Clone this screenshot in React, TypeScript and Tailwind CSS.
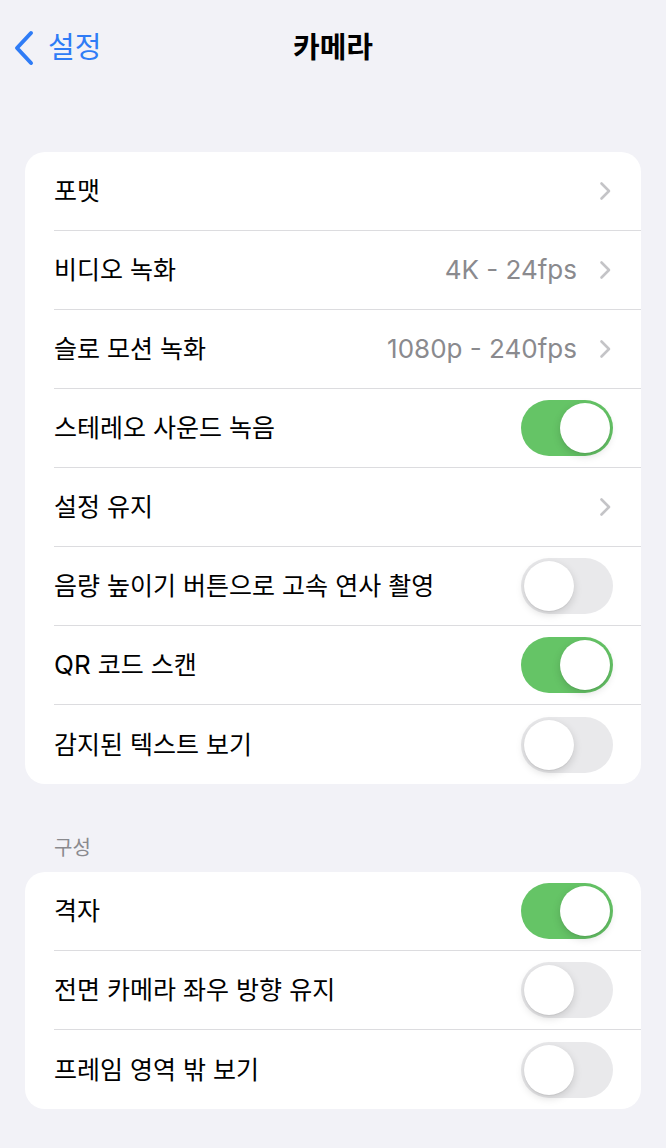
import React from "react";

const KR = { fontFamily: "Inter, 'Noto Sans CJK KR', sans-serif" };

function Chevron() {
  return (
    <svg width="13" height="20" viewBox="0 0 13 20" className="shrink-0">
      <path d="M2.5 2.5 L10 10 L2.5 17.5" fill="none" stroke="#c4c4c7" strokeWidth="2.6" strokeLinecap="round" strokeLinejoin="round" />
    </svg>
  );
}

function Toggle({ on }: { on: boolean }) {
  return (
    <div
      className={
        "relative h-[56px] w-[92px] shrink-0 rounded-full " +
        (on ? "bg-[#65c466]" : "bg-[#e9e9eb]")
      }
    >
      <div
        className={
          "absolute top-[3px] h-[50px] w-[50px] rounded-full bg-white shadow-[0_3px_8px_rgba(0,0,0,0.15),0_1px_1px_rgba(0,0,0,0.06)] " +
          (on ? "right-[3px]" : "left-[3px]")
        }
      />
    </div>
  );
}

type Row = {
  label: React.ReactNode;
  value?: string;
  chevron?: boolean;
  toggle?: boolean;
};

function Card({ rows }: { rows: Row[] }) {
  return (
    <div className="mx-[25px] overflow-hidden rounded-[20px] bg-white">
      {rows.map((r, i) => (
        <div key={i} className="ml-[29px] flex h-[79px] flex-col">
          <div className="flex flex-1 items-center pr-[28px]">
            <div className="flex-1 text-[25px] leading-[32px] text-black" style={KR}>
              {r.label}
            </div>
            {r.value && (
              <span className="mr-[22px] text-[26px] leading-[32px] text-[#8a8a8e]" style={{ fontFamily: "Inter, sans-serif" }}>
                {r.value}
              </span>
            )}
            {r.chevron && (
              <div className="mr-[1px]">
                <Chevron />
              </div>
            )}
            {r.toggle !== undefined && <Toggle on={r.toggle} />}
          </div>
          {i < rows.length - 1 && <div className="h-px bg-[#dcdcdf]" />}
        </div>
      ))}
    </div>
  );
}

export default function App() {
  const rows1: Row[] = [
    { label: "포맷", chevron: true },
    { label: "비디오 녹화", value: "4K - 24fps", chevron: true },
    { label: "슬로 모션 녹화", value: "1080p - 240fps", chevron: true },
    { label: "스테레오 사운드 녹음", toggle: true },
    { label: "설정 유지", chevron: true },
    { label: "음량 높이기 버튼으로 고속 연사 촬영", toggle: false },
    {
      label: (
        <>
          <span className="text-[26px]">QR</span> 코드 스캔
        </>
      ),
      toggle: true,
    },
    { label: "감지된 텍스트 보기", toggle: false },
  ];
  const rows2: Row[] = [
    { label: "격자", toggle: true },
    { label: "전면 카메라 좌우 방향 유지", toggle: false },
    { label: "프레임 영역 밖 보기", toggle: false },
  ];
  return (
    <div className="min-h-[1148px] w-[666px] bg-[#f2f2f7]" style={KR}>
      <div className="relative flex h-[96px] items-center justify-center">
        <div className="absolute left-[13px] top-[30px] flex items-center gap-[13px]">
          <svg width="22" height="36" viewBox="0 0 22 36">
            <path d="M18 3 L4 18 L18 33" fill="none" stroke="#2f7cf6" strokeWidth="4" strokeLinecap="round" strokeLinejoin="round" />
          </svg>
          <span className="text-[29px] leading-[36px] text-[#2f7cf6]">설정</span>
        </div>
        <span className="text-[29px] font-semibold text-black">카메라</span>
      </div>
      <div className="mt-[56px]">
        <Card rows={rows1} />
      </div>
      <div className="mt-[52px] mb-[12px] pl-[54px] text-[20px] leading-[24px] text-[#8a8a8e]">구성</div>
      <Card rows={rows2} />
    </div>
  );
}
